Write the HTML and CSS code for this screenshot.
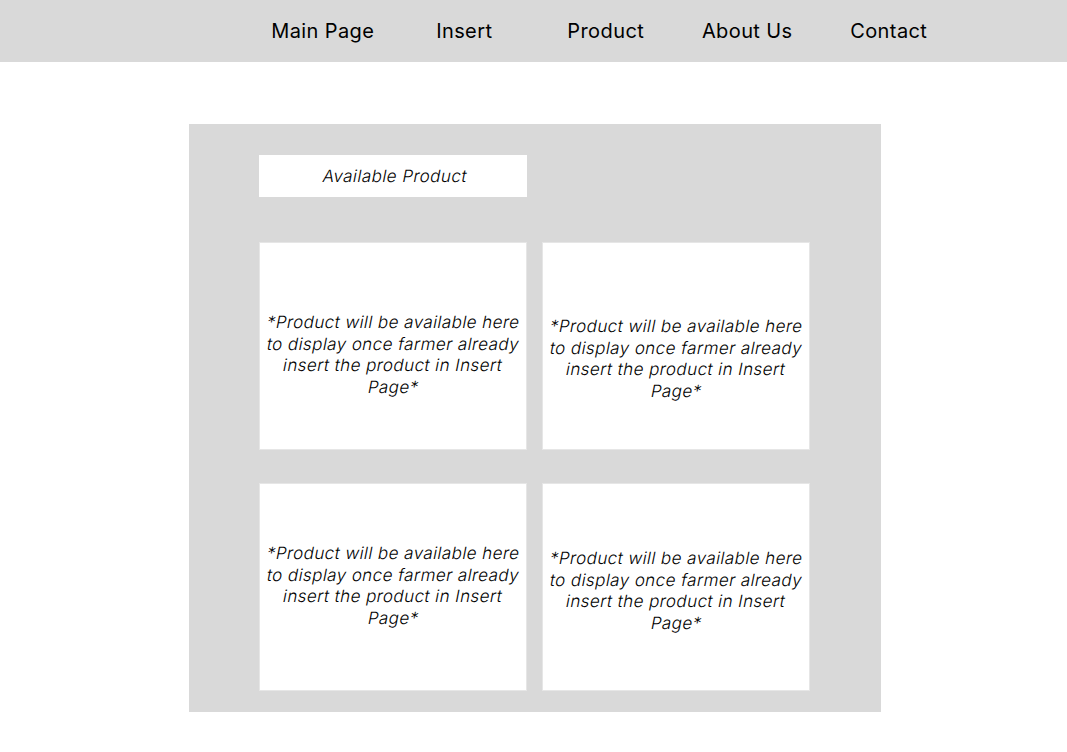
FILE: index.html
```html
<!DOCTYPE html>
<html>
<head>
<meta charset="utf-8">
<title>Available Product</title>
<link rel="stylesheet" href="styles.css">
</head>
<body>
<nav class="nav">
  <a class="nav-item" href="#">Main Page</a>
  <a class="nav-item" href="#">Insert</a>
  <a class="nav-item" href="#">Product</a>
  <a class="nav-item" href="#">About Us</a>
  <a class="nav-item" href="#">Contact</a>
</nav>
<main class="panel">
  <div class="title-box"><span class="slant">Available Product</span></div>
  <div class="grid">
    <div class="card card-a"><p class="note"><span class="slant">*Product will be available here</span><span class="slant">to display once farmer already</span><span class="slant">insert the product in Insert</span><span class="slant">Page*</span></p></div>
    <div class="card card-b"><p class="note"><span class="slant">*Product will be available here</span><span class="slant">to display once farmer already</span><span class="slant">insert the product in Insert</span><span class="slant">Page*</span></p></div>
    <div class="card card-c"><p class="note"><span class="slant">*Product will be available here</span><span class="slant">to display once farmer already</span><span class="slant">insert the product in Insert</span><span class="slant">Page*</span></p></div>
    <div class="card card-d"><p class="note"><span class="slant">*Product will be available here</span><span class="slant">to display once farmer already</span><span class="slant">insert the product in Insert</span><span class="slant">Page*</span></p></div>
  </div>
</main>
</body>
</html>
```
FILE: styles.css
```css
* { box-sizing: border-box; }
html, body { margin: 0; padding: 0; background: #fff; }
body { font-family: Inter, "Noto Sans", sans-serif; color: #000; }

.nav {
  height: 62px;
  background: #d9d9d9;
  display: flex;
  align-items: center;
  padding-left: 252px;
}
.nav-item {
  width: 141.5px;
  text-align: center;
  font-size: 20px;
  letter-spacing: 0.4px;
  color: #000;
  text-decoration: none;
}

.slant {
  display: inline-block;
  transform: skewX(-11deg);
  white-space: nowrap;
}

.panel {
  width: 692px;
  margin: 62px 0 0 189px;
  background: #d9d9d9;
  padding: 31px 70px 21px 70px;
}
.title-box {
  width: 268px;
  height: 42px;
  background: #fff;
  display: flex;
  align-items: center;
  justify-content: center;
  font-size: 17px;
  font-weight: 330;
  letter-spacing: 0.45px;
  padding-left: 4px;
}
.grid {
  margin-top: 45px;
  display: grid;
  grid-template-columns: 268px 268px;
  grid-auto-rows: 208px;
  column-gap: 15px;
  row-gap: 33px;
}
.card {
  background: #fff;
  border: 1px solid #e6e6e6;
  display: flex;
  justify-content: center;
  align-items: flex-start;
}
.note {
  margin: 0;
  display: flex;
  flex-direction: column;
  align-items: center;
  font-size: 17px;
  font-weight: 330;
  line-height: 21.6px;
  letter-spacing: 0.42px;
}
.card-a { padding-top: 69px; }
.card-b { padding-top: 73px; }
.card-c { padding-top: 59px; }
.card-d { padding-top: 64px; }
```
